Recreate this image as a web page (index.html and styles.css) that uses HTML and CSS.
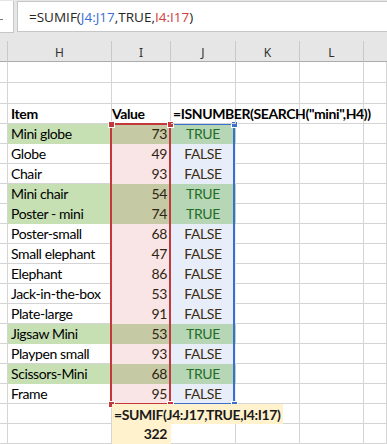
FILE: index.html
```html
<!DOCTYPE html>
<html>
<head>
<meta charset="utf-8">
<link rel="stylesheet" href="styles.css">
</head>
<body>
<div class="fbar">
  <div class="namebox"><span class="nb-mark"></span></div>
  <div class="fbox"><span class="ftext">=SUMIF(<span class="ref-b">J4:J17</span>,TRUE,<span class="ref-r">I4:I17</span>)</span></div>
</div>
<div class="sheet">
  <div class="grid">
    <div class="ch corner"></div><div class="ch">H</div><div class="ch">I</div><div class="ch">J</div><div class="ch">K</div><div class="ch">L</div><div class="ch last"></div>

    <div class="c"></div><div class="c"></div><div class="c"></div><div class="c"></div><div class="c"></div><div class="c"></div><div class="c"></div>
    <div class="c"></div><div class="c"></div><div class="c"></div><div class="c"></div><div class="c"></div><div class="c"></div><div class="c"></div>

    <div class="c"></div><div class="c b item">Item</div><div class="c b">Value</div><div class="c b formula">=ISNUMBER(SEARCH("mini",H4))</div><div class="c"></div><div class="c"></div><div class="c"></div>

    <div class="c"></div><div class="c item g">Mini globe</div><div class="c num vt">73</div><div class="c tf t">TRUE</div><div class="c"></div><div class="c"></div><div class="c"></div>
    <div class="c"></div><div class="c item">Globe</div><div class="c num vf">49</div><div class="c tf f">FALSE</div><div class="c"></div><div class="c"></div><div class="c"></div>
    <div class="c"></div><div class="c item">Chair</div><div class="c num vf">93</div><div class="c tf f">FALSE</div><div class="c"></div><div class="c"></div><div class="c"></div>
    <div class="c"></div><div class="c item g">Mini chair</div><div class="c num vt">54</div><div class="c tf t">TRUE</div><div class="c"></div><div class="c"></div><div class="c"></div>
    <div class="c"></div><div class="c item g">Poster - mini</div><div class="c num vt">74</div><div class="c tf t">TRUE</div><div class="c"></div><div class="c"></div><div class="c"></div>
    <div class="c"></div><div class="c item">Poster-small</div><div class="c num vf">68</div><div class="c tf f">FALSE</div><div class="c"></div><div class="c"></div><div class="c"></div>
    <div class="c"></div><div class="c item">Small elephant</div><div class="c num vf">47</div><div class="c tf f">FALSE</div><div class="c"></div><div class="c"></div><div class="c"></div>
    <div class="c"></div><div class="c item">Elephant</div><div class="c num vf">86</div><div class="c tf f">FALSE</div><div class="c"></div><div class="c"></div><div class="c"></div>
    <div class="c"></div><div class="c item">Jack-in-the-box</div><div class="c num vf">53</div><div class="c tf f">FALSE</div><div class="c"></div><div class="c"></div><div class="c"></div>
    <div class="c"></div><div class="c item">Plate-large</div><div class="c num vf">91</div><div class="c tf f">FALSE</div><div class="c"></div><div class="c"></div><div class="c"></div>
    <div class="c"></div><div class="c item g">Jigsaw Mini</div><div class="c num vt">53</div><div class="c tf t">TRUE</div><div class="c"></div><div class="c"></div><div class="c"></div>
    <div class="c"></div><div class="c item">Playpen small</div><div class="c num vf">93</div><div class="c tf f">FALSE</div><div class="c"></div><div class="c"></div><div class="c"></div>
    <div class="c"></div><div class="c item g">Scissors-Mini</div><div class="c num vt">68</div><div class="c tf t">TRUE</div><div class="c"></div><div class="c"></div><div class="c"></div>
    <div class="c"></div><div class="c item">Frame</div><div class="c num vf">95</div><div class="c tf f">FALSE</div><div class="c"></div><div class="c"></div><div class="c"></div>

    <div class="c"></div><div class="c"></div><div class="c b sumif"><span class="sumtext">=SUMIF(J4:J17,TRUE,I4:I17)</span></div><div class="c"></div><div class="c"></div><div class="c"></div><div class="c"></div>
    <div class="c"></div><div class="c"></div><div class="c b num y">322</div><div class="c"></div><div class="c"></div><div class="c"></div><div class="c"></div>
  </div>

  <div class="sel-red"></div>
  <div class="sel-blue"></div>
  <div class="h red" style="left:108px;top:80px"></div>
  <div class="h red" style="left:167px;top:80px"></div>
  <div class="h red" style="left:108px;top:360px"></div>
  <div class="h red" style="left:167px;top:360px"></div>
  <div class="h blue" style="left:231px;top:80px"></div>
  <div class="h blue" style="left:231px;top:360px"></div>
</div>
</body>
</html>
```

FILE: styles.css
```css
html, body {
  margin: 0;
  padding: 0;
  background: #ffffff;
}
body {
  width: 387px;
  height: 444px;
  overflow: hidden;
  font-family: "Lato", "Liberation Sans", sans-serif;
}
.fbar {
  height: 41px;
  background: #e6e6e6;
  display: flex;
  align-items: flex-start;
  box-sizing: border-box;
  padding-top: 1px;
}
.namebox {
  width: 13px;
  height: 31px;
  background: #ffffff;
  border-right: 1px solid #c6c6c6;
  border-bottom: 1px solid #c6c6c6;
  position: relative;
  flex: none;
}
.nb-mark {
  position: absolute;
  left: 0;
  top: 18px;
  width: 3px;
  height: 1px;
  background: #777;
}
.fbox {
  margin-left: 3px;
  flex: 1;
  height: 31px;
  box-sizing: border-box;
  background: #ffffff;
  border: 1px solid #c6c6c6;
  border-right: none;
  padding-left: 11px;
  display: flex;
  align-items: center;
}
.ftext {
  font-family: "Open Sans", "Liberation Sans", sans-serif;
  font-size: 13.5px;
  color: #262626;
  white-space: nowrap;
  padding-top: 1px;
}
.ref-b { color: #3b6fd3; }
.ref-r { color: #d0413f; }

.sheet {
  position: relative;
}
.grid {
  display: grid;
  grid-template-columns: 8px 104px 59px 65px 64px 64px 1fr;
  grid-template-rows: 21px 21px 21px;
  grid-auto-rows: 20px;
}
.ch {
  box-sizing: border-box;
  background: #e6e6e6;
  border-right: 1px solid #c9c9c9;
  border-bottom: 1px solid #ababab;
  font-family: "Noto Sans", "Liberation Sans", sans-serif;
  font-size: 12px;
  color: #303030;
  display: flex;
  align-items: center;
  justify-content: center;
  padding-top: 2px;
}
.ch.last { border-right: none; }
.c {
  box-sizing: border-box;
  border-right: 1px solid #d4d4d4;
  border-bottom: 1px solid #d4d4d4;
  font-size: 14px;
  letter-spacing: -0.4px;
  color: #000;
  white-space: nowrap;
  display: flex;
  align-items: center;
  line-height: 1;
  padding-top: 1px;
}
.b { font-weight: bold; }
.item { padding-left: 3px; }
.g {
  background: #c6e0b4;
  border-color: #c6e0b4;
}
.num {
  justify-content: flex-end;
  padding-right: 3px;
  color: #2f2412;
}
.vt { background: #c5c9a4; border-color: #c5c9a4; }
.vf { background: #f9e5e5; border-color: #f9e5e5; }
.tf { justify-content: center; }
.t { background: #b6d6b6; border-color: #b6d6b6; color: #1f6e24; }
.f { background: #e8eef9; border-color: #e8eef9; color: #3a2c14; }
.formula {
  padding-left: 2px;
  overflow: visible;
  z-index: 1;
  color: #000;
}
.sumif {
  overflow: visible;
  z-index: 1;
  padding: 0;
  border: none;
}
.sumtext {
  display: flex;
  align-items: center;
  height: 20px;
  box-sizing: border-box;
  padding-top: 1px;
  background: #fff2cc;
  padding-left: 2px;
  padding-right: 3px;
  color: #1a1a1a;
}
.y {
  background: #fff2cc;
  border-color: #fff2cc;
  color: #1a1a1a;
}
.sel-red {
  position: absolute;
  left: 110px;
  top: 82px;
  width: 61px;
  height: 282px;
  box-sizing: border-box;
  border: 2px solid #c4373a;
}
.sel-blue {
  position: absolute;
  left: 171px;
  top: 82px;
  width: 64px;
  height: 282px;
  box-sizing: border-box;
  border: 2px solid #3a6fd0;
  border-left: none;
}
.h {
  position: absolute;
  box-sizing: border-box;
  border: 1px solid #ffffff;
  width: 7px;
  height: 7px;
}
.red { background: #c4373a; }
.blue { background: #3a6fd0; }
```
